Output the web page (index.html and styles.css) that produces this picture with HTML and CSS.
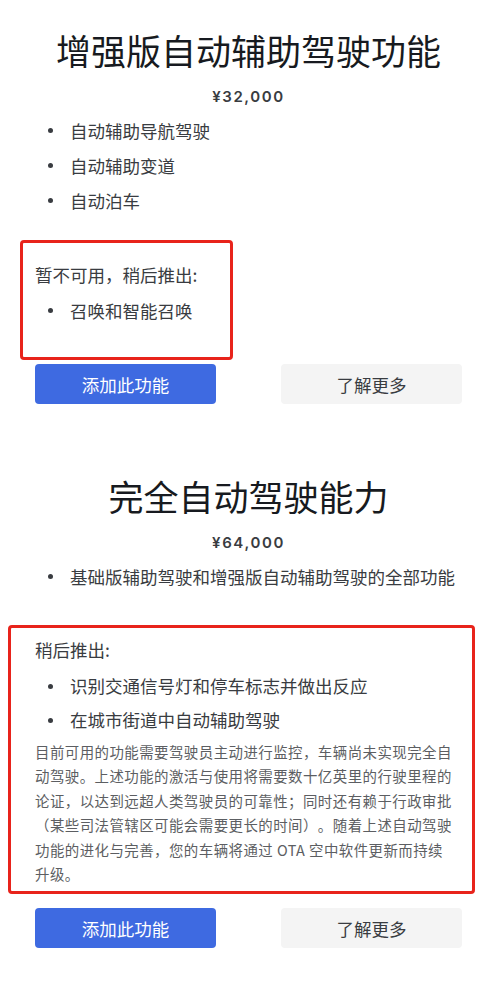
FILE: index.html
```html
<!doctype html>
<html lang="zh-cn">
<head>
  <meta charset="UTF-8">
  <meta name="viewport" content="width=device-width, initial-scale=1.0">
  <title>自动辅助驾驶功能</title>
  <link rel="stylesheet" href="styles.css">
</head>
<body>
<div class="page-wrapper">
  <section class="feature feature-first">
    <h1 class="feature-title">增强版自动辅助驾驶功能</h1>
    <p class="feature-price">¥32,000</p>
    <ul class="feature-list">
      <li>自动辅助导航驾驶</li>
      <li>自动辅助变道</li>
      <li>自动泊车</li>
    </ul>
    <div class="notice notice-small">
      <p class="notice-title">暂不可用，稍后推出:</p>
      <ul class="feature-list">
        <li>召唤和智能召唤</li>
      </ul>
    </div>
    <div class="actions">
      <a class="btn btn-primary" href="#">添加此功能</a>
      <a class="btn btn-secondary" href="#">了解更多</a>
    </div>
  </section>

  <section class="feature feature-second">
    <h1 class="feature-title">完全自动驾驶能力</h1>
    <p class="feature-price">¥64,000</p>
    <ul class="feature-list">
      <li>基础版辅助驾驶和增强版自动辅助驾驶的全部功能</li>
    </ul>
    <div class="notice notice-large">
      <p class="notice-title">稍后推出:</p>
      <ul class="feature-list feature-list-tight">
        <li>识别交通信号灯和停车标志并做出反应</li>
        <li>在城市街道中自动辅助驾驶</li>
      </ul>
      <p class="notice-desc">目前可用的功能需要驾驶员主动进行监控，车辆尚未实现完全自<br>动驾驶。上述功能的激活与使用将需要数十亿英里的行驶里程的<br>论证，以达到远超人类驾驶员的可靠性；同时还有赖于行政审批<br>（某些司法管辖区可能会需要更长的时间）。随着上述自动驾驶<br>功能的进化与完善，您的车辆将通过 OTA 空中软件更新而持续<br>升级。</p>
    </div>
    <div class="actions">
      <a class="btn btn-primary" href="#">添加此功能</a>
      <a class="btn btn-secondary" href="#">了解更多</a>
    </div>
  </section>
</div>
</body>
</html>
```

FILE: styles.css
```css
body {
  margin: 0;
  background: #fff;
  font-family: "Noto Sans CJK SC", "Noto Sans", sans-serif;
  color: #393c41;
}

p, ul, h1 {
  margin: 0;
  padding: 0;
}

.page-wrapper {
  padding: 0 37px 0 35px;
}

.feature-first {
  padding-top: 28px;
}

.feature-second {
  padding-top: 70px;
}

.feature-title {
  font-size: 35px;
  line-height: 44px;
  font-weight: 400;
  color: #171a20;
  text-align: center;
}

.feature-price {
  margin-top: 15px;
  font-family: "Inter", "Noto Sans", sans-serif;
  font-size: 15px;
  line-height: 20px;
  font-weight: 600;
  letter-spacing: 1.6px;
  color: #393c41;
  text-align: center;
}

.feature-list {
  list-style: none;
  padding-left: 13px;
  margin-top: 6px;
}

.feature-list li {
  display: flex;
  align-items: center;
  font-size: 17.5px;
  line-height: 35px;
}

.feature-list li:before {
  content: '';
  flex: none;
  width: 5px;
  height: 5px;
  margin-right: 17px;
  border-radius: 50%;
  background: #393c41;
}

.feature-list-tight {
  margin-top: 5px;
}

.feature-list-tight li {
  line-height: 34px;
}

.notice {
  border: 3px solid #e8231b;
  border-radius: 4px;
}

.notice-title {
  font-size: 17.5px;
  line-height: 28px;
}

.notice-small {
  width: 195px;
  margin: 22px 0 0 -15px;
  padding: 18px 0 29px 12px;
}

.notice-small .feature-list {
  margin-top: 4px;
}

.notice-large {
  margin: 31px -13px 0 -27px;
  padding: 8px 8px 5px 24px;
}

.notice-desc {
  margin-top: 3px;
  font-size: 14.45px;
  letter-spacing: 0.45px;
  line-height: 24.4px;
  color: #5c5e62;
  white-space: nowrap;
  text-spacing-trim: space-all;
}

.actions {
  display: flex;
  justify-content: space-between;
  margin-top: 4px;
}

.feature-second .actions {
  margin-top: 14px;
}

.btn {
  display: flex;
  align-items: center;
  justify-content: center;
  width: 181px;
  height: 40px;
  border-radius: 4px;
  font-size: 17.5px;
  text-decoration: none;
}

.btn-primary {
  background: #3e6ae1;
  color: #fff;
}

.btn-secondary {
  background: #f4f4f4;
  color: #393c41;
}
```
